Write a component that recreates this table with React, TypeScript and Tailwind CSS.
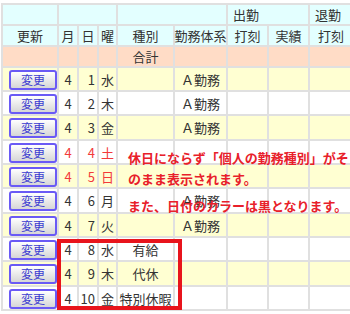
import React from "react";

type Row = { m: string; d: string; w: string; kind: string; sys: string; red?: boolean };

const rows: Row[] = [
  { m: "4", d: "1", w: "水", kind: "", sys: "Ａ勤務" },
  { m: "4", d: "2", w: "木", kind: "", sys: "Ａ勤務" },
  { m: "4", d: "3", w: "金", kind: "", sys: "Ａ勤務" },
  { m: "4", d: "4", w: "土", kind: "", sys: "", red: true },
  { m: "4", d: "5", w: "日", kind: "", sys: "", red: true },
  { m: "4", d: "6", w: "月", kind: "", sys: "Ａ勤務" },
  { m: "4", d: "7", w: "火", kind: "", sys: "Ａ勤務" },
  { m: "4", d: "8", w: "水", kind: "有給", sys: "" },
  { m: "4", d: "9", w: "木", kind: "代休", sys: "" },
  { m: "4", d: "10", w: "金", kind: "特別休暇", sys: "" },
];

const H = "bg-[#e3ffff] flex items-center justify-center whitespace-nowrap";
const S = "bg-[#ffdcc6] flex items-center justify-center whitespace-nowrap";

export default function App() {
  return (
    <div className="relative w-[350px] h-[314px] overflow-hidden bg-white font-['Noto_Sans_CJK_JP',sans-serif] text-[13px] leading-[13px] text-[#333]">
      <div className="ml-[1px] mt-[3px] inline-grid grid-cols-[54px_18px_18px_17px_55px_51px_39px_39px_42px] grid-rows-[19px_19px_19px_22px_22px_23px_22px_22px_23px_22px_22px_23px_22px] gap-[2px] p-[2px] bg-[#e0e0e0]">
        {/* header row 1 */}
        <div className={H}></div>
        <div className={`${H} col-span-3`}></div>
        <div className={`${H} col-span-2`}></div>
        <div className="bg-[#e3ffff] col-span-2 flex items-center pl-[5px] whitespace-nowrap">出勤</div>
        <div className="bg-[#e3ffff] flex items-center pl-[5px] whitespace-nowrap">退勤</div>
        {/* header row 2 */}
        <div className={H}>更新</div>
        <div className={H}>月</div>
        <div className={H}>日</div>
        <div className={H}>曜</div>
        <div className={H}>種別</div>
        <div className={H}>勤務体系</div>
        <div className={H}>打刻</div>
        <div className={H}>実績</div>
        <div className={H}>打刻</div>
        {/* summary row */}
        <div className={S}></div>
        <div className={S}></div>
        <div className={S}></div>
        <div className={S}></div>
        <div className={S}>合計</div>
        <div className={S}></div>
        <div className={S}></div>
        <div className={S}></div>
        <div className={S}></div>
        {rows.map((r, i) => {
          const bg = i % 2 === 0 ? "bg-[#ffffd2]" : "bg-white";
          const c = `${bg} flex items-center justify-center whitespace-nowrap`;
          const t = r.red ? "text-[#f23a3a]" : "";
          return (
            <React.Fragment key={i}>
              <div className={`${bg} flex items-center justify-end`}>
                <button className="w-[48px] h-[20px] mt-[1px] border-2 border-[#6a5af5] rounded-[3px] bg-gradient-to-b from-white to-[#d6d6d6] text-[#3b3bd0] text-[12px] leading-[12px] flex items-center justify-center">
                  変更
                </button>
              </div>
              <div className={`${c} ${t}`}>{r.m}</div>
              <div className={`${c} ${t} justify-end pr-[2px]`}>{r.d}</div>
              <div className={`${c} ${t}`}>{r.w}</div>
              <div className={c}>{r.kind}</div>
              <div className={c}>{r.sys}</div>
              <div className={c}></div>
              <div className={c}></div>
              <div className={c}></div>
            </React.Fragment>
          );
        })}
      </div>
      <div className="absolute left-[128px] top-[151px] text-[13px] leading-[14px] text-[#e8202a] font-semibold whitespace-nowrap">
        休日にならず「個人の勤務種別」がそ
      </div>
      <div className="absolute left-[128px] top-[172px] text-[13px] leading-[14px] text-[#e8202a] font-semibold whitespace-nowrap">
        のまま表示されます。
      </div>
      <div className="absolute left-[128px] top-[199px] text-[13px] leading-[14px] text-[#e8202a] font-semibold whitespace-nowrap">
        また、日付のカラーは黒となります。
      </div>
      <div className="absolute left-[57px] top-[239px] w-[125px] h-[71px] border-[4px] border-[#e8141c]"></div>
    </div>
  );
}
